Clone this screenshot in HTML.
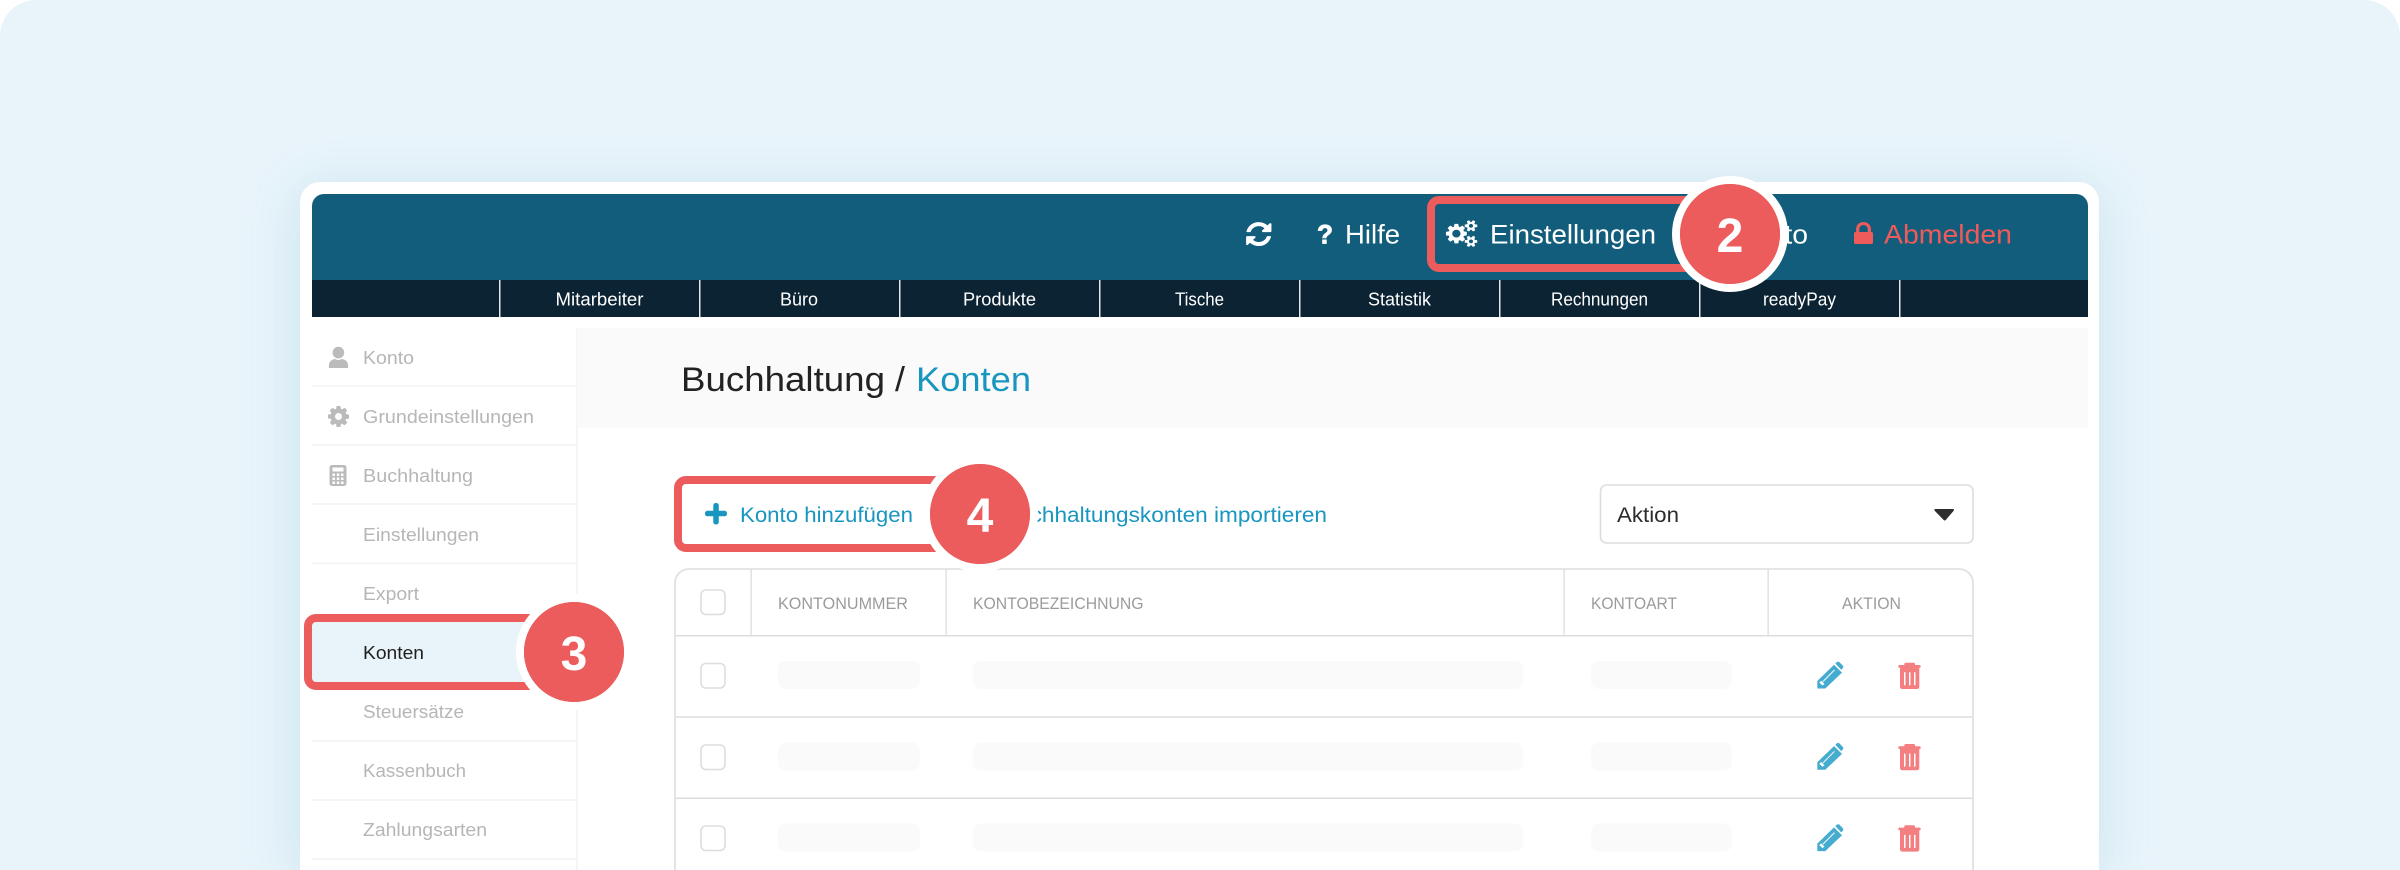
<!DOCTYPE html>
<html lang="de">
<head>
<meta charset="utf-8">
<title>Buchhaltung / Konten</title>
<style>
html,body{margin:0;padding:0;width:2400px;height:870px;overflow:hidden;background:#fff}
#bg{position:absolute;left:0;top:0;width:2400px;height:870px;background:#e8f4fa;border-radius:36px 36px 0 0;overflow:hidden}
#card{position:absolute;left:300px;top:182px;width:1799px;height:688px;background:#fff;border-radius:20px 20px 0 0;box-shadow:0 8px 50px rgba(90,170,205,.22)}
svg{position:absolute;left:0;top:0;display:block}
text{font-family:"Liberation Sans",sans-serif}
</style>
</head>
<body>
<div id="bg"><div id="card"></div>
<svg width="2400" height="870" viewBox="0 0 2400 870" xmlns="http://www.w3.org/2000/svg">
<!-- header -->
<path d="M312 280V206a12 12 0 0 1 12-12H2076a12 12 0 0 1 12 12V280z" fill="#125d7b"/>
<rect x="312" y="280" width="1776" height="37" fill="#0c2333"/>
<g fill="#e6e6e6">
<rect x="499" y="280" width="1.5" height="37"/><rect x="699" y="280" width="1.5" height="37"/><rect x="899" y="280" width="1.5" height="37"/><rect x="1099" y="280" width="1.5" height="37"/><rect x="1299" y="280" width="1.5" height="37"/><rect x="1499" y="280" width="1.5" height="37"/><rect x="1699" y="280" width="1.5" height="37"/><rect x="1899" y="280" width="1.5" height="37"/>
</g>
<g fill="#fff" font-size="18">
<text x="555.5" y="305.5" textLength="88" lengthAdjust="spacingAndGlyphs">Mitarbeiter</text>
<text x="780" y="305.5" textLength="38" lengthAdjust="spacingAndGlyphs">Büro</text>
<text x="963" y="305.5" textLength="73" lengthAdjust="spacingAndGlyphs">Produkte</text>
<text x="1175" y="305.5" textLength="49" lengthAdjust="spacingAndGlyphs">Tische</text>
<text x="1368" y="305.5" textLength="63" lengthAdjust="spacingAndGlyphs">Statistik</text>
<text x="1551" y="305.5" textLength="97" lengthAdjust="spacingAndGlyphs">Rechnungen</text>
<text x="1763" y="305.5" textLength="73" lengthAdjust="spacingAndGlyphs">readyPay</text>
</g>
<!-- refresh icon -->
<path transform="translate(1246.1,222.1) scale(.0165 .0156) translate(-128,-128)" fill="#fff" d="M1639 1056q0 5-1 7-64 268-268 434.5t-478 166.5q-146 0-282.5-55t-243.5-157l-129 129q-19 19-45 19t-45-19-19-45v-448q0-26 19-45t45-19h448q26 0 45 19t19 45-19 45l-137 137q71 66 161 102t187 36q134 0 250-65t186-179q11-17 53-117 8-23 30-23h192q13 0 22.5 9.5t9.5 22.5zm25-800v448q0 26-19 45t-45 19h-448q-26 0-45-19t-19-45 19-45l138-138q-148-137-349-137-134 0-250 65t-186 179q-11 17-53 117-8 23-30 23h-199q-13 0-22.5-9.5t-9.5-22.5v-7q65-268 270-434.5t480-166.5q146 0 284 55.5t245 156.5l130-129q19-19 45-19t45 19 19 45z"/>
<text x="1317" y="243.5" font-size="27" font-weight="bold" fill="#fff" stroke="#fff" stroke-width=".8" textLength="16" lengthAdjust="spacingAndGlyphs">?</text>
<text x="1345" y="243.5" font-size="27" fill="#fff" textLength="55" lengthAdjust="spacingAndGlyphs">Hilfe</text>
<!-- gears icon -->
<path transform="translate(1447,220) scale(.0163 .0152)" fill="#fff" d="M832 896q0-106-75-181t-181-75-181 75-75 181 75 181 181 75 181-75 75-181zm768 512q0-52-38-90t-90-38-90 38-38 90q0 53 37.5 90.5t90.5 37.5 90.5-37.5 37.5-90.5zm0-1024q0-52-38-90t-90-38-90 38-38 90q0 53 37.5 90.5t90.5 37.5 90.5-37.5 37.5-90.5zm-384 421v185q0 10-7 19.5t-16 10.5l-155 24q-11 35-32 76 34 48 90 115 7 11 7 20 0 12-7 19-23 30-82.5 89.5t-78.5 59.5q-11 0-21-7l-115-90q-37 19-77 31-11 108-23 155-7 24-30 24h-186q-11 0-20-7.5t-10-17.5l-23-153q-34-10-75-31l-118 89q-7 7-20 7-11 0-21-8-144-133-144-160 0-9 7-19 10-14 41-53t47-61q-23-44-35-82l-152-24q-10-1-17-9.5t-7-19.5v-185q0-10 7-19.5t16-10.5l155-24q11-35 32-76-34-48-90-115-7-11-7-20 0-12 7-20 22-30 82-89t79-59q11 0 21 7l115 90q34-18 77-32 11-108 23-154 7-24 30-24h186q11 0 20 7.5t10 17.5l23 153q34 10 75 31l118-89q8-7 20-7 11 0 21 8 144 133 144 160 0 8-7 19-12 16-42 54t-45 60q23 48 34 82l152 23q10 2 17 10.5t7 19.5zm640 533v140q0 16-149 31-12 27-30 52 51 113 51 138 0 4-4 7-122 71-124 71-8 0-46-47t-52-68q-20 2-30 2t-30-2q-14 21-52 68t-46 47q-2 0-124-71-4-3-4-7 0-25 51-138-18-25-30-52-149-15-149-31v-140q0-16 149-31 13-29 30-52-51-113-51-138 0-4 4-7 4-2 35-20t59-34 30-16q8 0 46 46.5t52 67.5q20-2 30-2t30 2q51-71 92-112l6-2q4 0 124 70 4 3 4 7 0 25-51 138 17 23 30 52 149 15 149 31zm0-1024v140q0 16-149 31-12 27-30 52 51 113 51 138 0 4-4 7-122 71-124 71-8 0-46-47t-52-68q-20 2-30 2t-30-2q-14 21-52 68t-46 47q-2 0-124-71-4-3-4-7 0-25 51-138-18-25-30-52-149-15-149-31v-140q0-16 149-31 13-29 30-52-51-113-51-138 0-4 4-7 4-2 35-20t59-34 30-16q8 0 46 46.5t52 67.5q20-2 30-2t30 2q51-71 92-112l6-2q4 0 124 70 4 3 4 7 0 25-51 138 17 23 30 52 149 15 149 31z"/>
<text x="1490" y="243.5" font-size="27" fill="#fff" textLength="166" lengthAdjust="spacingAndGlyphs">Einstellungen</text>
<text x="1734" y="243.5" font-size="27" fill="#fff" textLength="74" lengthAdjust="spacingAndGlyphs">Konto</text>
<!-- lock -->
<path transform="translate(1854,222) scale(.0165 .0156) translate(-320,-128)" fill="#ef5a5a" d="M640 768h512v-192q0-106-75-181t-181-75-181 75-75 181v192zm832 96v576q0 40-28 68t-68 28h-960q-40 0-68-28t-28-68v-576q0-40 28-68t68-28h32v-192q0-184 132-316t316-132 316 132 132 316v192h32q40 0 68 28t28 68z"/>
<text x="1884" y="243.5" font-size="27" fill="#ef5a5a" textLength="128" lengthAdjust="spacingAndGlyphs">Abmelden</text>

<!-- sidebar -->
<rect x="576" y="328" width="2" height="542" fill="#f5f5f5"/>
<g fill="#f5f5f5">
<rect x="312" y="385" width="264" height="2"/><rect x="312" y="444" width="264" height="2"/><rect x="312" y="503" width="264" height="2"/><rect x="312" y="562.5" width="264" height="2"/><rect x="312" y="622" width="264" height="2"/><rect x="312" y="740" width="264" height="2"/><rect x="312" y="799" width="264" height="2"/><rect x="312" y="858" width="264" height="2"/>
</g>
<g font-size="18" fill="#b6b6b6">
<text x="363" y="364" textLength="51" lengthAdjust="spacingAndGlyphs">Konto</text>
<text x="363" y="423" textLength="171" lengthAdjust="spacingAndGlyphs">Grundeinstellungen</text>
<text x="363" y="482" textLength="110" lengthAdjust="spacingAndGlyphs">Buchhaltung</text>
<text x="363" y="541" textLength="116" lengthAdjust="spacingAndGlyphs">Einstellungen</text>
<text x="363" y="600" textLength="56" lengthAdjust="spacingAndGlyphs">Export</text>
<text x="363" y="718" textLength="101" lengthAdjust="spacingAndGlyphs">Steuersätze</text>
<text x="363" y="777" textLength="103" lengthAdjust="spacingAndGlyphs">Kassenbuch</text>
<text x="363" y="836" textLength="124" lengthAdjust="spacingAndGlyphs">Zahlungsarten</text>
</g>
<!-- user -->
<circle cx="338.4" cy="352.6" r="5.8" fill="#bbb"/>
<path fill="#bbb" d="M329 368Q328 360 335 359Q338.4 361 341.8 359Q349 360 348 368Z"/>
<!-- cog -->
<path transform="translate(328,406) scale(.0137 .0137) translate(-128,-128)" fill="#bbb" d="M1152 896q0-106-75-181t-181-75-181 75-75 181 75 181 181 75 181-75 75-181zm512-109v222q0 12-8 23t-20 13l-185 28q-19 54-39 91 35 50 107 138 10 12 10 25t-9 23q-27 37-99 108t-94 71q-12 0-26-9l-138-108q-44 23-91 38-16 136-29 186-7 28-36 28h-222q-14 0-24.5-8.5t-11.5-21.5l-28-184q-49-16-90-37l-141 107q-10 9-25 9-14 0-25-11-126-114-165-168-7-10-7-23 0-12 8-23 15-21 51-66.5t54-70.5q-27-50-41-99l-183-27q-13-2-21-12.5t-8-23.5v-222q0-12 8-23t19-13l186-28q14-46 39-92-40-57-107-138-10-12-10-24 0-10 9-23 26-36 98.5-107.5t94.5-71.5q13 0 26 10l138 107q44-23 91-38 16-136 29-186 7-28 36-28h222q14 0 24.5 8.5t11.5 21.5l28 184q49 16 90 37l142-107q9-9 24-9 13 0 25 10 129 119 165 170 7 8 7 22 0 12-8 23-15 21-51 66.5t-54 70.5q26 50 41 98l183 28q13 2 21 12.5t8 23.5z"/>
<!-- calculator -->
<path fill="#bbb" fill-rule="evenodd" d="M332 465h12a2.5 2.5 0 0 1 2.5 2.5v16a2.5 2.5 0 0 1-2.5 2.5h-12a2.5 2.5 0 0 1-2.5-2.5v-16a2.5 2.5 0 0 1 2.5-2.5zM332.5 467.5v4h11v-4zM332.5 473.5v2.5h2.500v-2.5zM336.8 473.5v2.5h2.5v-2.5zM341 473.5v2.5h2.5v-2.5zM332.5 477.5v2.5h2.5v-2.5zM336.8 477.5v2.5h2.5v-2.5zM341 477.5v2.5h2.5v-2.5zM332.5 481.5v2.5h2.5v-2.5zM336.8 481.5v2.5h2.5v-2.5zM341 481.5v2.5h2.5v-2.5z"/>

<!-- title -->
<rect x="577" y="328" width="1511" height="100" fill="#fafafa"/>
<text x="681" y="391" font-size="34" fill="#222" textLength="204" lengthAdjust="spacingAndGlyphs">Buchhaltung</text>
<text x="895" y="391" font-size="34" fill="#222" textLength="10" lengthAdjust="spacingAndGlyphs">/</text>
<text x="916" y="391" font-size="34" fill="#1896bf" textLength="115" lengthAdjust="spacingAndGlyphs">Konten</text>

<!-- toolbar -->
<text x="1003" y="522" font-size="21" fill="#1896bf" textLength="324" lengthAdjust="spacingAndGlyphs">Buchhaltungskonten importieren</text>
<rect x="1600.5" y="485" width="372.5" height="58" rx="6" fill="#fff" stroke="#ddd" stroke-width="1.6"/>
<text x="1617" y="522" font-size="21" fill="#2c2c2c" textLength="62" lengthAdjust="spacingAndGlyphs">Aktion</text>
<path d="M1935 509h18a1 1 0 0 1 .7 1.7l-8 9.3a1.3 1.3 0 0 1-2 0l-9-9.3a1 1 0 0 1 .3-1.7z" fill="#2e2e2e"/>

<!-- table -->
<path d="M675 870V583a14 14 0 0 1 14-14H1959a14 14 0 0 1 14 14V870" fill="#fff" stroke="#ddd" stroke-width="1.6"/>
<g fill="#ddd">
<rect x="675" y="635" width="1298" height="1.5"/><rect x="675" y="716.3" width="1298" height="1.5"/><rect x="675" y="797.5" width="1298" height="1.5"/>
<rect x="750.5" y="569" width="1.3" height="66"/><rect x="945.5" y="569" width="1.3" height="66"/><rect x="1563.5" y="569" width="1.3" height="66"/><rect x="1767.5" y="569" width="1.3" height="66"/>
</g>
<g font-size="16.5" fill="#9b9b9b">
<text x="778" y="609" textLength="130" lengthAdjust="spacingAndGlyphs">KONTONUMMER</text>
<text x="973" y="609" textLength="170.5" lengthAdjust="spacingAndGlyphs">KONTOBEZEICHNUNG</text>
<text x="1591" y="609" textLength="86" lengthAdjust="spacingAndGlyphs">KONTOART</text>
<text x="1842" y="609" textLength="59" lengthAdjust="spacingAndGlyphs">AKTION</text>
</g>
<g fill="#fff" stroke="#ddd" stroke-width="1.6">
<rect x="701" y="590" width="24" height="24.5" rx="5"/>
<rect x="701" y="663.5" width="24" height="24.5" rx="5"/>
<rect x="701" y="745" width="24" height="24.5" rx="5"/>
<rect x="701" y="826" width="24" height="24.5" rx="5"/>
</g>
<g fill="#fafafa">
<rect x="778" y="661" width="142" height="28" rx="8"/><rect x="973" y="661" width="550" height="28" rx="8"/><rect x="1591" y="661" width="141" height="28" rx="8"/>
<rect x="778" y="742.5" width="142" height="28" rx="8"/><rect x="973" y="742.5" width="550" height="28" rx="8"/><rect x="1591" y="742.5" width="141" height="28" rx="8"/>
<rect x="778" y="823.5" width="142" height="28" rx="8"/><rect x="973" y="823.5" width="550" height="28" rx="8"/><rect x="1591" y="823.5" width="141" height="28" rx="8"/>
</g>
<!-- pencils -->
<g>
<path fill="#45abcf" d="M1817.3 688.500V681L1834 664.800L1842 672.600L1825.300 688.500Z"/><path fill="#45abcf" d="M1835.300 663.500L1837 661.900Q1838.300 661.200 1839.500 662.200L1842.800 665.600Q1843.800 666.900 1842.900 668.100L1841.200 669.800Z"/><path fill="none" stroke="#fff" stroke-width="1" d="M1823 681.500L1834.500 670"/><path fill="#fff" d="M1819.300 682.500L1821.300 680.700L1824.500 684L1822.500 685.500Z"/>
</g>
<g transform="translate(0,81.3)">
<path fill="#45abcf" d="M1817.3 688.500V681L1834 664.800L1842 672.600L1825.300 688.500Z"/><path fill="#45abcf" d="M1835.300 663.500L1837 661.900Q1838.300 661.200 1839.500 662.200L1842.800 665.600Q1843.800 666.900 1842.900 668.100L1841.200 669.800Z"/><path fill="none" stroke="#fff" stroke-width="1" d="M1823 681.500L1834.500 670"/><path fill="#fff" d="M1819.300 682.500L1821.300 680.700L1824.500 684L1822.500 685.500Z"/>
</g>
<g transform="translate(0,162.6)">
<path fill="#45abcf" d="M1817.3 688.500V681L1834 664.800L1842 672.600L1825.300 688.500Z"/><path fill="#45abcf" d="M1835.300 663.500L1837 661.900Q1838.300 661.200 1839.500 662.200L1842.800 665.600Q1843.800 666.900 1842.900 668.100L1841.200 669.800Z"/><path fill="none" stroke="#fff" stroke-width="1" d="M1823 681.500L1834.500 670"/><path fill="#fff" d="M1819.300 682.500L1821.300 680.700L1824.500 684L1822.500 685.500Z"/>
</g>
<!-- trash -->
<g>
<path fill="#f37f80" d="M1904.300 665V664Q1904.300 662.700 1906 662.700H1913.300Q1915 662.700 1915 664V665H1919.700Q1920.700 665 1920.700 666.300Q1920.700 667.700 1919.700 667.700H1919.300V686.500Q1919.300 689 1916.800 689H1902.500Q1900 689 1900 686.500V667.700H1899.300Q1898.300 667.700 1898.300 666.300Q1898.300 665 1899.300 665Z"/>
<path fill="#fff" d="M1904 672.300h1.500v13h-1.500zM1909 672.300h1.500v13h-1.500zM1914 672.300h1.500v13h-1.500z"/>
</g>
<g transform="translate(0,81.3)">
<path fill="#f37f80" d="M1904.300 665V664Q1904.300 662.700 1906 662.700H1913.300Q1915 662.700 1915 664V665H1919.700Q1920.700 665 1920.700 666.300Q1920.700 667.700 1919.700 667.700H1919.300V686.500Q1919.300 689 1916.800 689H1902.500Q1900 689 1900 686.500V667.700H1899.300Q1898.300 667.700 1898.300 666.300Q1898.300 665 1899.300 665Z"/>
<path fill="#fff" d="M1904 672.300h1.500v13h-1.500zM1909 672.300h1.500v13h-1.500zM1914 672.300h1.500v13h-1.500z"/>
</g>
<g transform="translate(0,162.6)">
<path fill="#f37f80" d="M1904.300 665V664Q1904.300 662.700 1906 662.700H1913.300Q1915 662.700 1915 664V665H1919.700Q1920.700 665 1920.700 666.300Q1920.700 667.700 1919.700 667.700H1919.300V686.500Q1919.300 689 1916.800 689H1902.500Q1900 689 1900 686.500V667.700H1899.300Q1898.300 667.700 1898.300 666.300Q1898.300 665 1899.300 665Z"/>
<path fill="#fff" d="M1904 672.300h1.500v13h-1.500zM1909 672.300h1.500v13h-1.500zM1914 672.300h1.500v13h-1.500z"/>
</g>

<!-- highlight box 2 -->
<rect x="1431" y="200" width="300" height="68" rx="8" fill="none" stroke="#ec5c5c" stroke-width="8"/>
<!-- highlight box 3 -->
<rect x="308" y="618" width="260" height="68" rx="8" fill="#e8f4fa" stroke="#ec5c5c" stroke-width="8"/>
<text x="363" y="659" font-size="18" fill="#1f1f1f" textLength="61" lengthAdjust="spacingAndGlyphs">Konten</text>
<!-- highlight box 4 -->
<rect x="678" y="480" width="300" height="68" rx="8" fill="#fff" stroke="#ec5c5c" stroke-width="8"/>
<rect x="705" y="510.800" width="22" height="5.500" rx="2.500" fill="#1896bf"/>
<rect x="713.300" y="503" width="5.500" height="21.500" rx="2.500" fill="#1896bf"/>
<text x="740" y="522" font-size="21" fill="#1896bf" textLength="173" lengthAdjust="spacingAndGlyphs">Konto hinzufügen</text>

<!-- step badges -->
<circle cx="1730" cy="234" r="54" fill="#ec5c5c" stroke="#fff" stroke-width="8"/>
<circle cx="1730" cy="234" r="50" fill="#ec5c5c"/>
<text x="1730" y="252" font-size="48" font-weight="bold" fill="#fff" text-anchor="middle">2</text>
<circle cx="574" cy="652" r="54" fill="#ec5c5c" stroke="#fff" stroke-width="8"/>
<circle cx="574" cy="652" r="50" fill="#ec5c5c"/>
<text x="574" y="670" font-size="48" font-weight="bold" fill="#fff" text-anchor="middle">3</text>
<circle cx="980" cy="514" r="54" fill="#ec5c5c" stroke="#fff" stroke-width="8"/>
<circle cx="980" cy="514" r="50" fill="#ec5c5c"/>
<text x="980" y="532" font-size="48" font-weight="bold" fill="#fff" text-anchor="middle">4</text>
</svg>
</div>
</body>
</html>
